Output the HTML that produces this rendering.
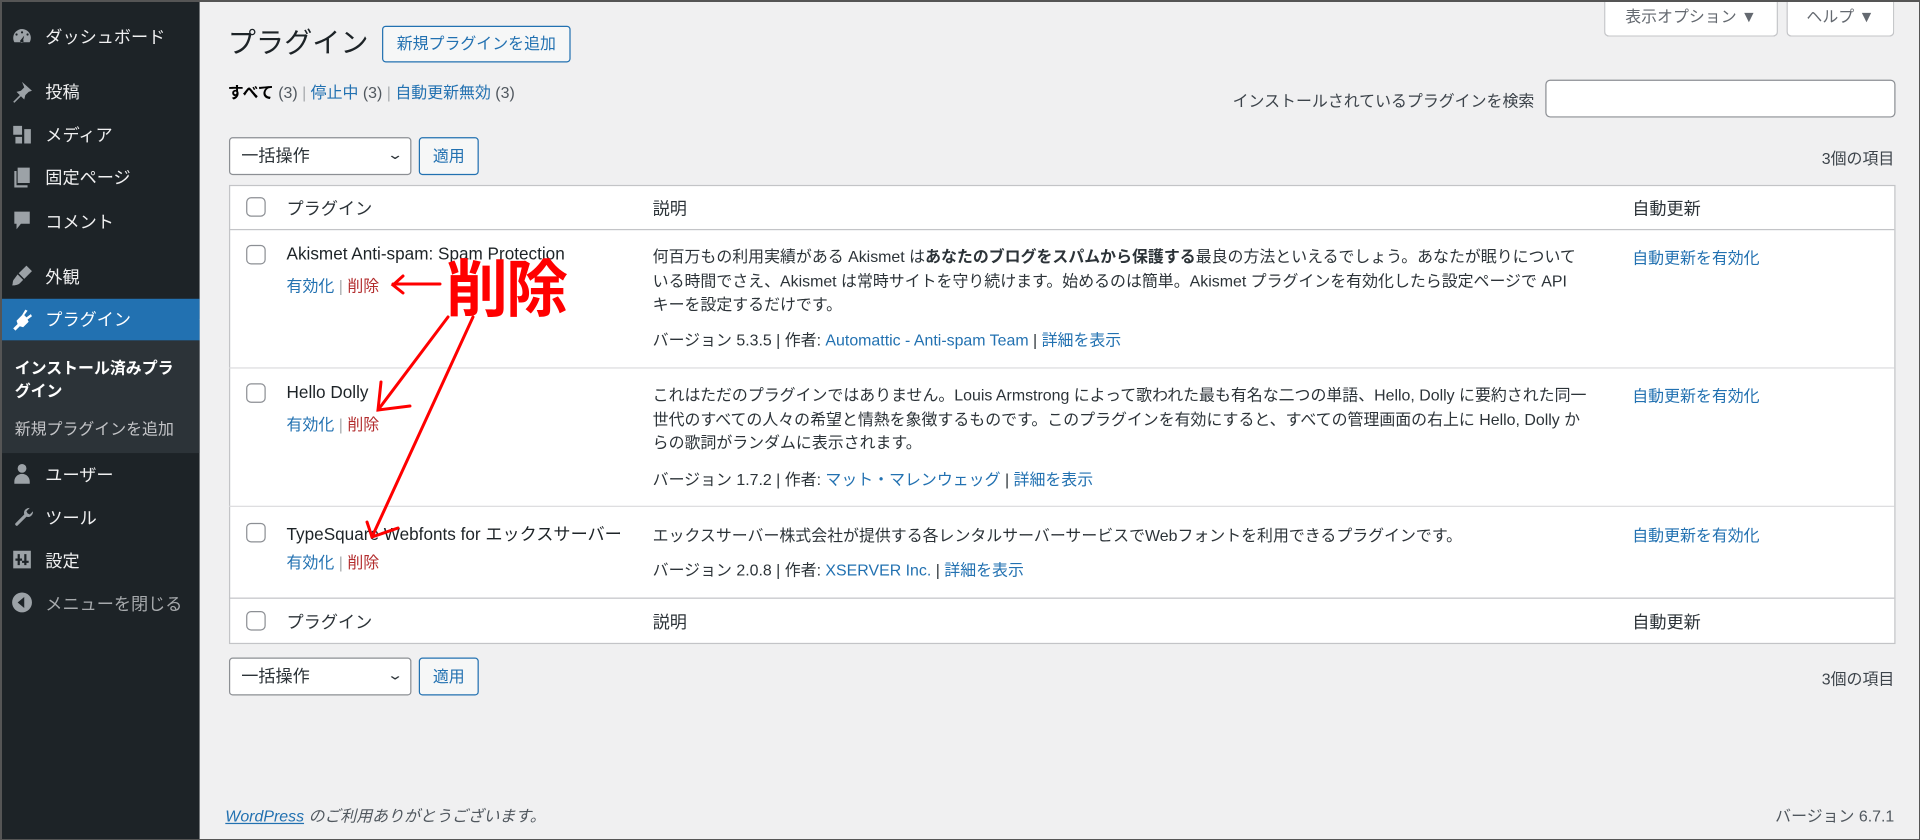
<!DOCTYPE html>
<html><head><meta charset="utf-8"><style>
*{box-sizing:border-box;margin:0;padding:0}
html,body{width:1920px;height:840px;overflow:hidden;background:#f0f0f1}
body{font-family:"Liberation Sans","Noto Sans CJK JP",sans-serif;color:#1d2327}
#w{position:absolute;left:0;top:0;width:1568px;height:686px;transform:scale(1.22449);transform-origin:0 0;background:#f0f0f1;font-size:13px}
.a{position:absolute;white-space:nowrap}
#sb{position:absolute;left:0;top:0;width:163px;height:686px;background:#1d2327}
.mi{position:absolute;left:37px;font-size:14px;color:#f0f0f1;line-height:20px}
.ic{position:absolute;left:9px;width:18px;height:18px;fill:#9ca2a7}
.lk{color:#2271b1}
.del{color:#b32d2e}
.sep{color:#a7aaad}
.cb{position:absolute;width:16px;height:16px;border:1px solid #8c8f94;border-radius:4px;background:#fff}
.btn{position:absolute;border:1px solid #2271b1;color:#2271b1;border-radius:3px;background:#f6f7f7;text-align:center;font-size:13px}
.sel{position:absolute;border:1px solid #8c8f94;border-radius:3px;background:#fff;font-size:14px;padding-left:9px;color:#2c3338}
.hr{position:absolute;left:187px;width:1360px;height:1px;background:#dcdcde}
</style></head><body>
<div id="w">
<div id="sb">
<svg class="ic" style="top:21px" viewBox="0 0 20 20"><path d="M10 3a8 8 0 0 0-8 8c0 1.5.4 2.9 1.1 4h13.8A8 8 0 0 0 10 3zm0 2a1 1 0 1 1 0 2 1 1 0 0 1 0-2zM5 7a1 1 0 1 1 0 2 1 1 0 0 1 0-2zm10 0a1 1 0 1 1 0 2 1 1 0 0 1 0-2zm-3 2l-1 4a1.5 1.5 0 1 1-2-.3z"/></svg>
<div class="mi" style="top:20px">ダッシュボード</div>
<svg class="ic" style="top:66px" viewBox="0 0 20 20"><path d="M10 1l9 8-3 1-3 3-1 4-3-3-6 6-1-1 6-6-3-3 4-1 3-3z"/></svg>
<div class="mi" style="top:65px">投稿</div>
<svg class="ic" style="top:101px" viewBox="0 0 20 20"><path d="M2 2h8v8H2zM12 5h6v13h-6zM4 12h6v6H4z"/></svg>
<div class="mi" style="top:100px">メディア</div>
<svg class="ic" style="top:136px" viewBox="0 0 20 20"><path d="M6 1h11v14H6zM3 4h2v13h10v2H3z"/></svg>
<div class="mi" style="top:135px">固定ページ</div>
<svg class="ic" style="top:171px" viewBox="0 0 20 20"><path d="M3 2h14v11H9l-4 5v-5H3z"/></svg>
<div class="mi" style="top:171px">コメント</div>
<svg class="ic" style="top:216px" viewBox="0 0 20 20"><path d="M14 1l5 5-7 7-5-5zM6 9l5 5-3 3c-2 2-6 2-7 2 1-2 0-4 2-6z"/></svg>
<div class="mi" style="top:216px">外観</div>
<div style="position:absolute;left:0;top:244px;width:163px;height:34px;background:#2271b1"></div>
<svg class="ic" style="top:252px;fill:#fff" viewBox="0 0 20 20"><path d="M13 1l2 1-3 4 2 2 4-3 1 2-4 3 1 2-5 5-3-1-4 4-2-2 4-4-1-3 5-5z"/></svg>
<div class="mi" style="top:251px;color:#fff">プラグイン</div>
<div style="position:absolute;left:155px;top:253px;width:0;height:0;border:8px solid transparent;border-right-color:#f0f0f1"></div>
<div style="position:absolute;left:0;top:278px;width:163px;height:92px;background:#2c3338"></div>
<div class="a" style="left:12px;top:291px;font-size:13px;font-weight:bold;color:#fff;line-height:19px">インストール済みプラ<br>グイン</div>
<div class="a" style="left:12px;top:340px;font-size:13px;color:#c3c4c7">新規プラグインを追加</div>
<svg class="ic" style="top:378px" viewBox="0 0 20 20"><path d="M10 1a4 4 0 1 1 0 8 4 4 0 0 1 0-8zM3 17c0-4 3-7 7-7s7 3 7 7v2H3z"/></svg>
<div class="mi" style="top:378px">ユーザー</div>
<svg class="ic" style="top:413px" viewBox="0 0 20 20"><path d="M17 2l-3 3 1 2 2 1 3-3c0 3-2 6-6 5l-8 8c-1 1-3-1-2-2l8-8c-1-4 2-6 5-6z"/></svg>
<div class="mi" style="top:413px">ツール</div>
<svg class="ic" style="top:448px" viewBox="0 0 20 20"><path d="M2 2h16v16H2zm4 3v4H4v2h2v4h2v-4h2V9H8V5zm6 0v6h-2v2h2v2h2v-2h2v-2h-2V5z"/></svg>
<div class="mi" style="top:448px">設定</div>
<svg class="ic" style="top:483px" viewBox="0 0 20 20"><path d="M10 1a9 9 0 1 1 0 18 9 9 0 0 1 0-18zm2 4l-6 5 6 5z"/></svg>
<div class="mi" style="top:483px;color:#a7aaad">メニューを閉じる</div>
</div>

<div class="a" style="left:1310px;top:-1px;width:142px;height:31px;border:1px solid #c3c4c7;border-top:0;border-radius:0 0 4px 4px;background:#fff;color:#646970;font-size:13px;line-height:30px;text-align:center">表示オプション ▼</div>
<div class="a" style="left:1459px;top:-1px;width:88px;height:31px;border:1px solid #c3c4c7;border-top:0;border-radius:0 0 4px 4px;background:#fff;color:#646970;font-size:13px;line-height:30px;text-align:center">ヘルプ ▼</div>

<div class="a" style="left:186px;top:19px;font-size:23px;line-height:32px;color:#1d2327">プラグイン</div>
<div class="btn" style="left:312px;top:21px;width:154px;height:30px;line-height:28px">新規プラグインを追加</div>

<div class="a" style="left:186px;top:67px;line-height:18px;color:#50575e"><b style="color:#000">すべて</b> (3) <span class="sep">|</span> <span class="lk">停止中</span> (3) <span class="sep">|</span> <span class="lk">自動更新無効</span> (3)</div>
<div class="a" style="right:315px;top:72px;color:#3c434a">インストールされているプラグインを検索</div>
<div class="a" style="left:1262px;top:65px;width:286px;height:31px;border:1px solid #8c8f94;border-radius:4px;background:#fff"></div>

<div class="sel" style="left:187px;top:112px;width:149px;height:31px;line-height:29px">一括操作<span style="position:absolute;right:8px;top:0;font-size:11px;transform:scaleX(1.5)">⌄</span></div>
<div class="btn" style="left:342px;top:112px;width:49px;height:31px;line-height:29px">適用</div>
<div class="a" style="right:21px;top:119px;color:#3c434a">3個の項目</div>

<div class="a" style="left:187px;top:151px;width:1361px;height:375px;border:1px solid #c3c4c7;background:#fff"></div>
<div class="hr" style="top:187px;background:#c3c4c7"></div>
<div class="hr" style="top:300px"></div>
<div class="hr" style="top:413px"></div>
<div class="hr" style="top:488px;background:#c3c4c7"></div>

<div class="cb" style="left:201px;top:161px"></div>
<div class="a" style="left:234px;top:160px;font-size:14px;color:#2c3338">プラグイン</div>
<div class="a" style="left:533px;top:160px;font-size:14px;color:#2c3338">説明</div>
<div class="a" style="left:1333px;top:160px;font-size:14px;color:#2c3338">自動更新</div>

<div class="cb" style="left:201px;top:200px"></div>
<div class="a" style="left:234px;top:199px;font-size:14px">Akismet Anti-spam: Spam Protection</div>
<div class="a" style="left:234px;top:223px"><span class="lk">有効化</span> <span class="sep">|</span> <span class="del">削除</span></div>
<div class="a" style="left:533px;top:200px;line-height:19.5px;color:#2c3338">何百万もの利用実績がある Akismet は<b>あなたのブログをスパムから保護する</b>最良の方法といえるでしょう。あなたが眠りについて<br>いる時間でさえ、Akismet は常時サイトを守り続けます。始めるのは簡単。Akismet プラグインを有効化したら設定ページで API<br>キーを設定するだけです。</div>
<div class="a" style="left:533px;top:267px;color:#2c3338">バージョン 5.3.5 | 作者: <span class="lk">Automattic - Anti-spam Team</span> | <span class="lk">詳細を表示</span></div>
<div class="a lk" style="left:1333px;top:200px">自動更新を有効化</div>

<div class="cb" style="left:201px;top:313px"></div>
<div class="a" style="left:234px;top:312px;font-size:14px">Hello Dolly</div>
<div class="a" style="left:234px;top:336px"><span class="lk">有効化</span> <span class="sep">|</span> <span class="del">削除</span></div>
<div class="a" style="left:533px;top:313px;line-height:19.5px;color:#2c3338">これはただのプラグインではありません。Louis Armstrong によって歌われた最も有名な二つの単語、Hello, Dolly に要約された同一<br>世代のすべての人々の希望と情熱を象徴するものです。このプラグインを有効にすると、すべての管理画面の右上に Hello, Dolly か<br>らの歌詞がランダムに表示されます。</div>
<div class="a" style="left:533px;top:381px;color:#2c3338">バージョン 1.7.2 | 作者: <span class="lk">マット・マレンウェッグ</span> | <span class="lk">詳細を表示</span></div>
<div class="a lk" style="left:1333px;top:313px">自動更新を有効化</div>

<div class="cb" style="left:201px;top:427px"></div>
<div class="a" style="left:234px;top:426px;font-size:14px">TypeSquare Webfonts for エックスサーバー</div>
<div class="a" style="left:234px;top:449px"><span class="lk">有効化</span> <span class="sep">|</span> <span class="del">削除</span></div>
<div class="a" style="left:533px;top:427px;color:#2c3338">エックスサーバー株式会社が提供する各レンタルサーバーサービスでWebフォントを利用できるプラグインです。</div>
<div class="a" style="left:533px;top:455px;color:#2c3338">バージョン 2.0.8 | 作者: <span class="lk">XSERVER Inc.</span> | <span class="lk">詳細を表示</span></div>
<div class="a lk" style="left:1333px;top:427px">自動更新を有効化</div>

<div class="cb" style="left:201px;top:499px"></div>
<div class="a" style="left:234px;top:498px;font-size:14px;color:#2c3338">プラグイン</div>
<div class="a" style="left:533px;top:498px;font-size:14px;color:#2c3338">説明</div>
<div class="a" style="left:1333px;top:498px;font-size:14px;color:#2c3338">自動更新</div>

<div class="sel" style="left:187px;top:537px;width:149px;height:31px;line-height:29px">一括操作<span style="position:absolute;right:8px;top:0;font-size:11px;transform:scaleX(1.5)">⌄</span></div>
<div class="btn" style="left:342px;top:537px;width:49px;height:31px;line-height:29px">適用</div>
<div class="a" style="right:21px;top:544px;color:#3c434a">3個の項目</div>

<div class="a" style="left:184px;top:656px;font-style:italic;color:#50575e"><span class="lk" style="text-decoration:underline">WordPress</span> のご利用ありがとうございます。</div>
<div class="a" style="right:21px;top:656px;color:#50575e">バージョン 6.7.1</div>
</div>

<div class="a" style="left:446px;top:246px;font-size:62px;line-height:76px;color:#ff0000;font-weight:bold;font-family:'Noto Sans CJK JP',sans-serif;letter-spacing:-2px">削除</div>
<svg style="position:absolute;left:0;top:0" width="1920" height="840" fill="none" stroke="#ff0000" stroke-width="3" stroke-linecap="round">
<path d="M440 284H393M403 276L393 285 403 293"/>
<path d="M448 317L378 410M381 382L378 410 410 406"/>
<path d="M473 317L372 537M367 522L372 537 398 528"/>
</svg>
<div style="position:absolute;left:0;top:0;width:1920px;height:840px;border:2px solid #555;border-right-width:1px;border-bottom-width:1px"></div>
</body></html>
